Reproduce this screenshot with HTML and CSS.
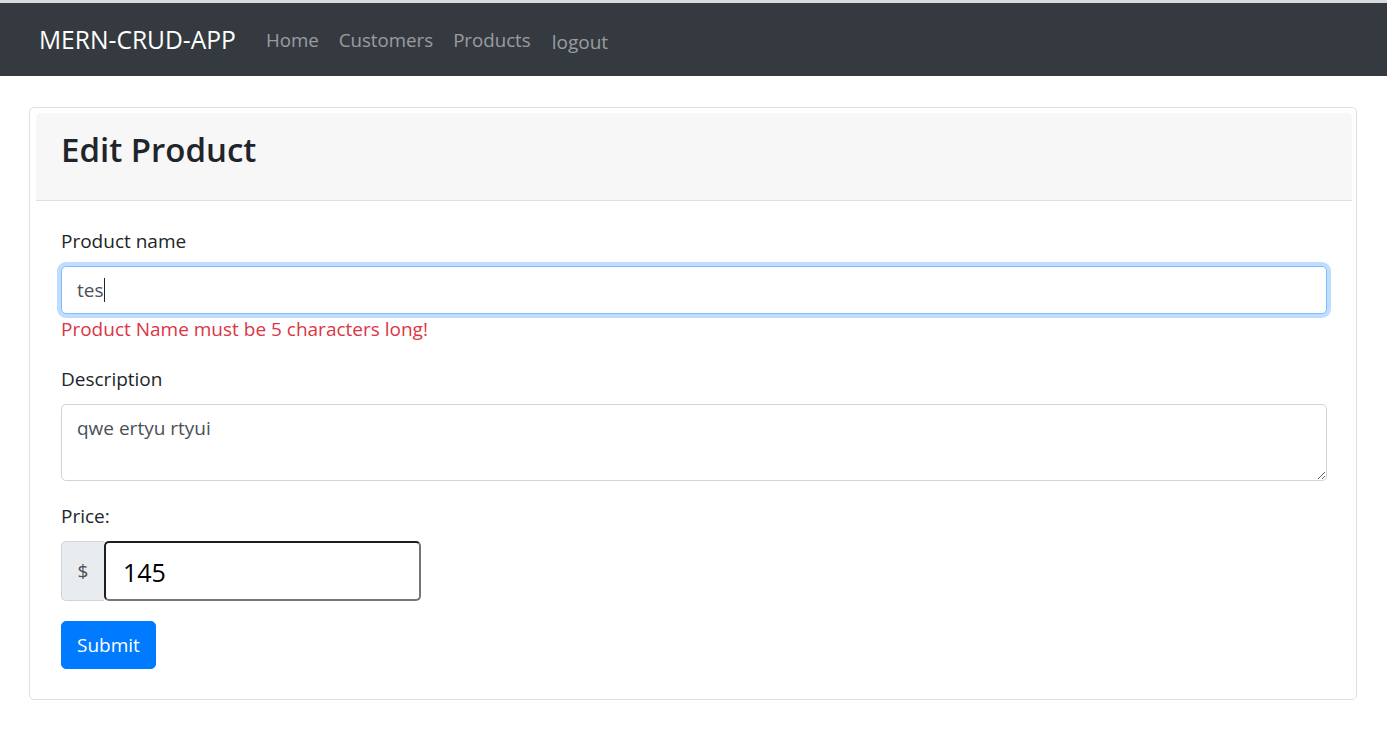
FILE: index.html
```html
<!DOCTYPE html>
<html lang="en">
<head>
<meta charset="utf-8">
<title>MERN-CRUD-APP</title>
<link rel="stylesheet" href="styles.css">
</head>
<body>
<div class="page">
  <nav class="navbar">
    <a class="brand" href="#">MERN-CRUD-APP</a>
    <ul class="nav">
      <li><a class="nav-link" href="#">Home</a></li>
      <li><a class="nav-link" href="#">Customers</a></li>
      <li><a class="nav-link" href="#">Products</a></li>
      <li><a class="nav-link logout" href="#">logout</a></li>
    </ul>
  </nav>
  <main class="container">
    <div class="card">
      <div class="card-header">
        <h3 class="title">Edit Product</h3>
      </div>
      <div class="card-body">
        <form class="form">
          <div class="form-group">
            <label class="label">Product name</label>
            <div class="form-control focused">tes<span class="caret"></span></div>
            <div class="invalid">Product Name must be 5 characters long!</div>
          </div>
          <div class="form-group">
            <label class="label" for="desc">Description</label>
            <textarea id="desc" class="form-control textarea" rows="2">qwe ertyu rtyui</textarea>
          </div>
          <div class="form-group">
            <label class="label" for="price">Price:</label>
            <div class="input-group">
              <span class="addon">$</span>
              <input id="price" class="price-input" type="text" value="145">
            </div>
          </div>
          <button type="button" class="btn">Submit</button>
        </form>
      </div>
    </div>
  </main>
</div>
</body>
</html>
```
FILE: styles.css
```css
* { box-sizing: border-box; }
html, body { margin: 0; padding: 0; background: #fff; }
body {
  font-family: "Open Sans", "Noto Sans", sans-serif;
  font-size: 19px;
  color: #212529;
}
.page { margin-right: 3px; }

.navbar {
  display: flex;
  align-items: center;
  height: 76px;
  border-top: 3px solid #dadbdc;
  background: #343a40;
  padding: 2px 20px 0 39px;
}
.brand {
  color: #fff;
  text-decoration: none;
  font-size: 24.6px;
  margin-right: 20px;
  line-height: 1;
}
.nav {
  display: flex;
  list-style: none;
  margin: 0;
  padding: 0;
}
.nav-link {
  display: block;
  padding: 0 10px;
  color: rgba(255,255,255,.5);
  text-decoration: none;
  font-size: 18.7px;
}
.nav-link.logout { margin-left: 1px; padding-top: 2px; font-size: 19px; }

.container { padding: 31px 30px 30px 29px; }
.card {
  border: 1px solid #dfdfdf;
  border-radius: 5px;
  padding: 5px 4px 5px 6px;
}
.card-header {
  background: #f7f7f7;
  border-bottom: 1px solid #dfdfdf;
  border-radius: 5px 5px 0 0;
  padding: 11px 25px 25px;
}
.title {
  margin: 0;
  font-size: 33px;
  font-weight: 600;
  line-height: 51px;
}
.card-body { padding: 25px; }

.form-group { margin-bottom: 20px; }
.label {
  display: block;
  line-height: 30px;
  margin-bottom: 10px;
}
.form-control {
  display: block;
  width: 100%;
  height: 48px;
  padding: 7.5px 15px;
  font-family: inherit;
  font-size: 19px;
  line-height: 30px;
  color: #495057;
  background: #fff;
  border: 1px solid #ced4da;
  border-radius: 5px;
}
.focused {
  border-color: #80bdff;
  box-shadow: 0 0 0 4px rgba(0,123,255,.25);
}
.caret {
  display: inline-block;
  width: 1px;
  height: 24px;
  background: #212529;
  vertical-align: -5px;
}
.invalid {
  color: #dc3545;
  line-height: 30px;
}
.textarea {
  height: 77px;
  resize: both;
}
.input-group {
  display: flex;
  height: 60px;
  width: 360px;
}
.addon {
  display: flex;
  align-items: center;
  justify-content: center;
  width: 43px;
  background: #e9ecef;
  border: 1px solid #ced4da;
  border-right: 0;
  border-radius: 5px 0 0 5px;
  color: #495057;
}
.price-input {
  flex: 1;
  min-width: 0;
  font-family: inherit;
  font-size: 25px;
  color: #000;
  padding: 2px 17px 0;
  border-style: solid;
  border-width: 2px;
  border-color: #1f1f1f #767676 #767676 #1f1f1f;
  border-radius: 5px;
  outline: none;
}
.btn {
  height: 48px;
  padding: 0 15px;
  font-family: inherit;
  font-size: 19px;
  color: #fff;
  background: #007bff;
  border: 1px solid #007bff;
  border-radius: 5px;
}
```
